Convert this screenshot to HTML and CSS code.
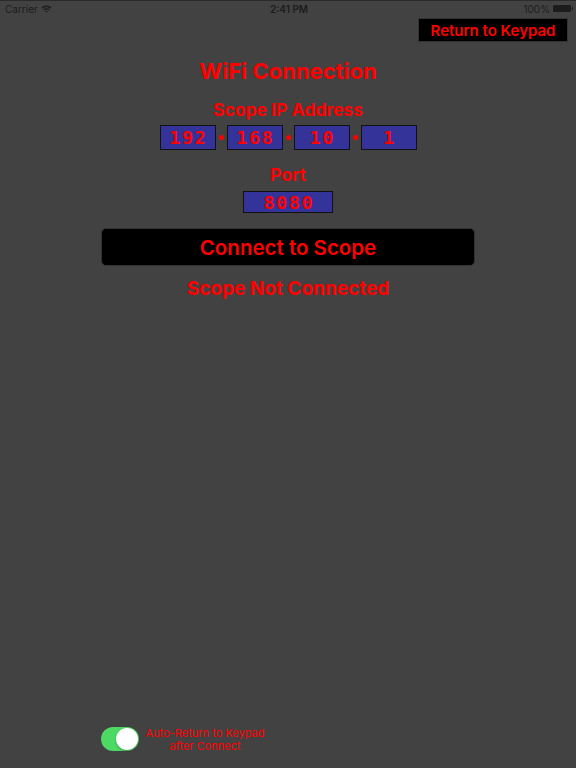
FILE: index.html
```html
<!DOCTYPE html>
<html>

<head lang="en">
    <meta charset="utf-8" />
    <meta name="viewport" content="width=device-width, initial-scale=1" />
    <title>WiFi Connection</title>
    <link rel="stylesheet" href="styles.css">
</head>

<body>
    <div class="screen">
        <div class="status-bar">
            <span class="carrier">Carrier
                <svg class="wifi" width="11" height="8" viewBox="0 0 11 8">
                    <path d="M0.5 2.6 A7 7 0 0 1 10.5 2.6 L9.4 3.7 A5.4 5.4 0 0 0 1.6 3.7 Z" fill="#1c1c1c" />
                    <path d="M2.4 4.5 A4.3 4.3 0 0 1 8.6 4.5 L7.5 5.6 A2.8 2.8 0 0 0 3.5 5.6 Z" fill="#1c1c1c" />
                    <path d="M4.3 6.4 A1.7 1.7 0 0 1 6.7 6.4 L5.5 7.6 Z" fill="#1c1c1c" />
                </svg>
            </span>
            <span class="clock">2:41 PM</span>
            <span class="battery">100%
                <span class="battery-body"></span><span class="battery-tip"></span>
            </span>
        </div>

        <div class="top-row">
            <button class="return-btn">Return to Keypad</button>
        </div>

        <h1 class="title">WiFi Connection</h1>

        <p class="label">Scope IP Address</p>
        <div class="ip-row">
            <span class="field ip">192</span>
            <span class="dot"></span>
            <span class="field ip">168</span>
            <span class="dot"></span>
            <span class="field ip">10</span>
            <span class="dot"></span>
            <span class="field ip">1</span>
        </div>

        <p class="label port-label">Port</p>
        <span class="field port">8080</span>

        <button class="connect-btn">Connect to Scope</button>

        <p class="state">Scope Not Connected</p>

        <div class="footer">
            <span class="switch"><span class="knob"></span></span>
            <span class="switch-text">Auto-Return to Keypad<br>after Connect</span>
        </div>
    </div>
</body>

</html>
```

FILE: styles.css
```css
body {
    margin: 0;
    background-color: #424242;
    font-family: Inter, Roboto, "Noto Sans", sans-serif;
}

.screen {
    height: 768px;
    display: flex;
    flex-direction: column;
    align-items: center;
    box-sizing: border-box;
    border-top: 1px solid #2a2a2a;
    overflow: hidden;
}

/* status bar */
.status-bar {
    align-self: stretch;
    height: 15px;
    display: flex;
    justify-content: space-between;
    align-items: center;
    padding: 0 3px 0 5px;
    font-size: 10px;
    color: #1c1c1c;
}

.carrier,
.battery {
    width: 90px;
    display: flex;
    align-items: center;
    gap: 3px;
}

.battery {
    justify-content: flex-end;
    gap: 0;
}

.clock {
    font-weight: 600;
}

.battery-body {
    margin-left: 3px;
    width: 18px;
    height: 7px;
    background-color: #1c1c1c;
    border-radius: 1px;
}

.battery-tip {
    width: 1px;
    height: 3px;
    margin-left: 1px;
    background-color: #1c1c1c;
}

/* keypad button */
.top-row {
    align-self: stretch;
    display: flex;
    justify-content: flex-end;
    padding-right: 8px;
    margin-top: 2px;
}

.return-btn {
    width: 150px;
    height: 24px;
    padding: 0;
    border: 1px solid #333;
    background-color: #000;
    color: #ff0000;
    font-family: inherit;
    font-size: 15px;
    font-weight: 600;
}

.title {
    margin: 16px 0 0 0;
    line-height: 26px;
    font-size: 22px;
    font-weight: 700;
    color: #ff0000;
}

.label {
    margin: 16px 0 0 0;
    line-height: 20px;
    font-size: 17.5px;
    font-weight: 700;
    color: #ff0000;
}

.port-label {
    margin-top: 15px;
}

.ip-row {
    margin-top: 5px;
    display: flex;
    align-items: center;
    gap: 3px;
}

.field {
    box-sizing: border-box;
    display: flex;
    align-items: center;
    justify-content: center;
    background-color: #333399;
    border: 1px solid #111;
    color: #ff0000;
    font-family: "DejaVu Sans Mono", monospace;
    font-weight: 700;
    font-size: 18.5px;
    letter-spacing: 1.5px;
    text-indent: 1.5px;
}

.ip {
    width: 56px;
    height: 25px;
}

.dot {
    width: 5px;
    height: 5px;
    border-radius: 50%;
    background-color: #ff0000;
}

.port {
    margin-top: 6px;
    width: 90px;
    height: 22px;
}

.connect-btn {
    margin-top: 15px;
    width: 374px;
    height: 38px;
    padding: 0;
    border: 1px solid #333;
    border-radius: 5px;
    background-color: #000;
    color: #ff0000;
    font-family: inherit;
    font-size: 20.5px;
    font-weight: 600;
}

.state {
    margin: 12px 0 0 0;
    line-height: 22px;
    font-size: 19px;
    font-weight: 700;
    color: #ff0000;
}

/* auto return switch */
.footer {
    margin-top: auto;
    margin-bottom: 15px;
    align-self: stretch;
    padding-left: 101px;
    display: flex;
    align-items: center;
    gap: 5px;
}

.switch {
    box-sizing: border-box;
    width: 38px;
    height: 24px;
    padding: 1px;
    border-radius: 12px;
    background-color: #4cd964;
    display: flex;
    justify-content: flex-end;
}

.knob {
    width: 22px;
    height: 22px;
    border-radius: 50%;
    background-color: #fff;
    box-shadow: 0 1px 2px rgba(0, 0, 0, 0.3);
}

.switch-text {
    width: 122px;
    text-align: center;
    font-size: 11px;
    line-height: 13px;
    padding-top: 2px;
    color: #ff0000;
}
```
